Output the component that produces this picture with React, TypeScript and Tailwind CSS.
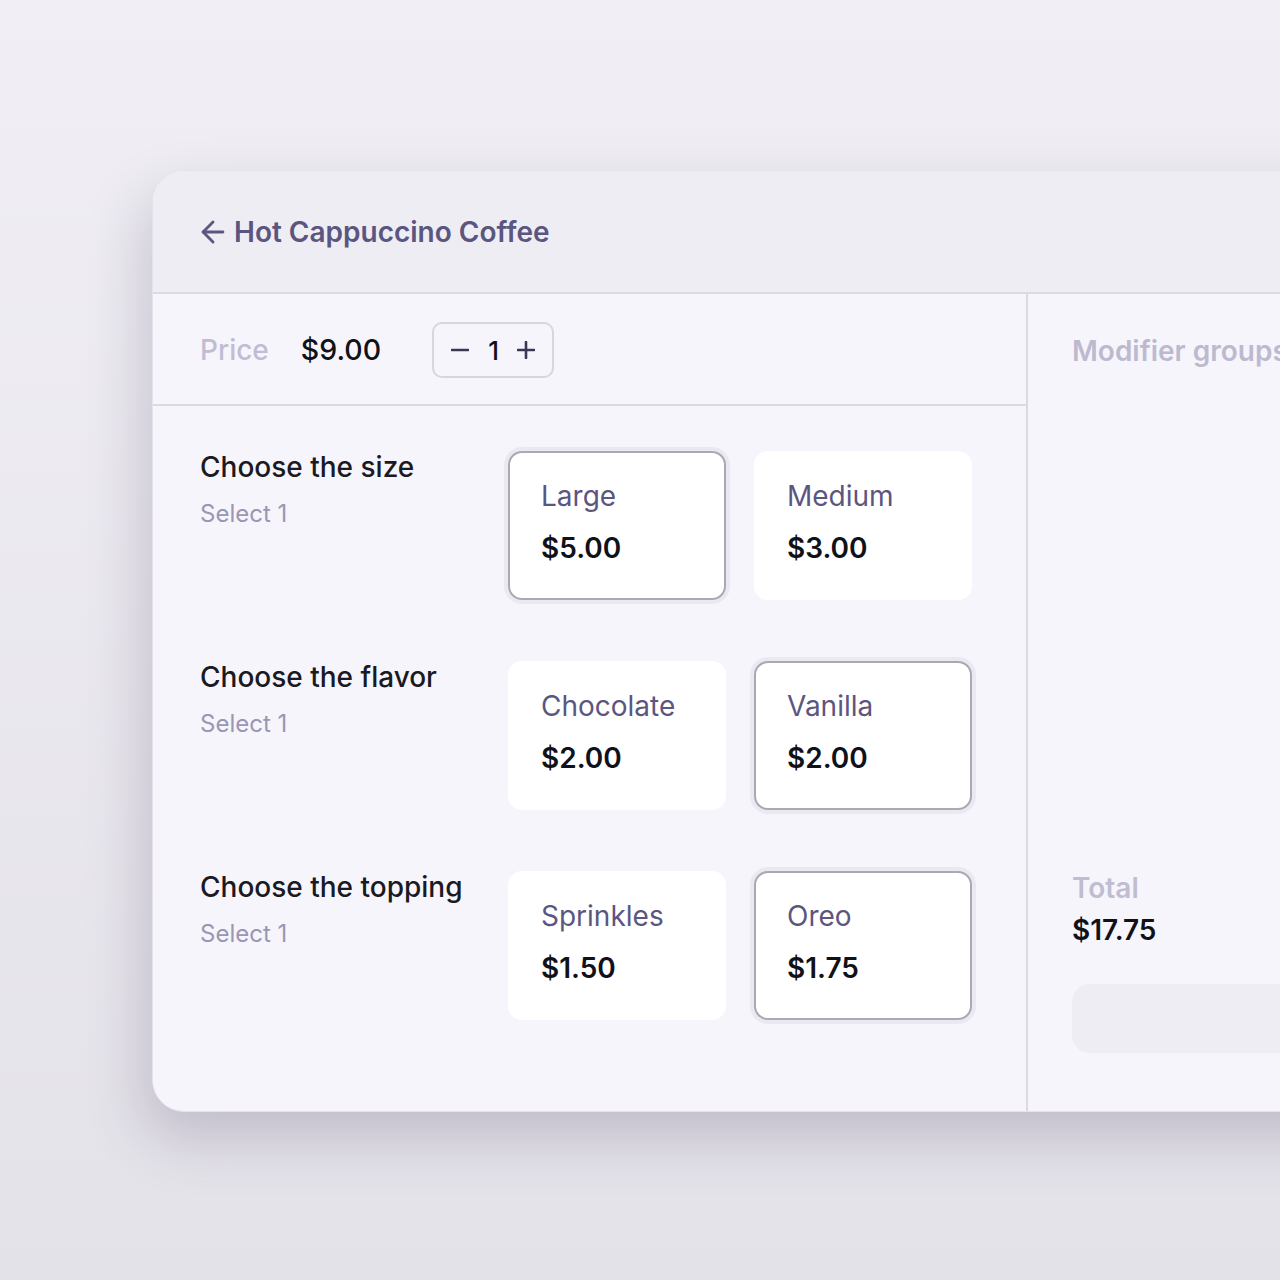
import { ArrowLeft } from "lucide-react";

const groups = [
  {
    title: "Choose the size",
    options: [
      { name: "Large", price: "$5.00", selected: true },
      { name: "Medium", price: "$3.00", selected: false },
    ],
  },
  {
    title: "Choose the flavor",
    options: [
      { name: "Chocolate", price: "$2.00", selected: false },
      { name: "Vanilla", price: "$2.00", selected: true },
    ],
  },
  {
    title: "Choose the topping",
    options: [
      { name: "Sprinkles", price: "$1.50", selected: false },
      { name: "Oreo", price: "$1.75", selected: true },
    ],
  },
];

function OptionCard({ name, price, selected }: { name: string; price: string; selected: boolean }) {
  return (
    <div
      className={
        selected
          ? "w-[218px] h-[149px] rounded-[14px] bg-white border-2 border-[#aaa8b4] ring-4 ring-[#ebe9f0] pl-[31px] pt-[27px]"
          : "w-[218px] h-[149px] rounded-[14px] bg-white border-2 border-white pl-[31px] pt-[27px]"
      }
    >
      <div className="text-[28px] leading-8 text-[#5b5680]">{name}</div>
      <div className="mt-5 text-[28px] leading-8 font-semibold text-[#111118]">{price}</div>
    </div>
  );
}

export default function App() {
  return (
    <div
      className="w-full h-[1280px] overflow-hidden bg-gradient-to-b from-[#f1eff5] to-[#e4e2e9] pt-[170px] pl-[152px]"
      style={{ fontFamily: "Inter, 'Noto Sans', sans-serif" }}
    >
      <div className="w-[1250px] h-[942px] rounded-l-[32px] bg-[#f7f5fc] border border-[#e4e2ea] shadow-[-8px_26px_60px_rgba(40,30,70,0.2)] overflow-hidden flex flex-col">
        <div className="h-[123px] shrink-0 bg-[#efedf4] border-b-2 border-[#dcd9e3] flex items-center pl-[43px] gap-1">
          <ArrowLeft size={34} strokeWidth={2} className="text-[#5b5680]" />
          <h1 className="text-[28px] font-semibold text-[#5b5680]">Hot Cappuccino Coffee</h1>
        </div>

        <div className="flex flex-1">
          <div className="w-[875px] shrink-0 border-r-2 border-[#dcd9e3]">
            <div className="h-[112px] border-b-2 border-[#dcd9e3] flex items-center pl-[47px] pt-[2px]">
              <span className="text-[28px] font-medium text-[#c0bdd3]">Price</span>
              <span className="ml-8 text-[28.5px] font-medium text-[#111118]">$9.00</span>
              <div className="ml-[51px] w-[122px] h-[56px] rounded-[10px] border-2 border-[#d8d5e0] flex items-center justify-between px-[17px]">
                <svg width="18" height="18" viewBox="0 0 18 18" className="text-[#3a3850]">
                  <path d="M1 9h16" stroke="currentColor" strokeWidth="2.6" strokeLinecap="round" />
                </svg>
                <span className="text-[26px] font-medium text-[#111118] ml-[1px]">1</span>
                <svg width="18" height="18" viewBox="0 0 18 18" className="text-[#3a3850]">
                  <path d="M1 9h16M9 1v16" stroke="currentColor" strokeWidth="2.6" strokeLinecap="round" />
                </svg>
              </div>
            </div>

            <div className="pt-[45px] pl-[47px] flex flex-col gap-[61px]">
              {groups.map((g) => (
                <div key={g.title} className="flex">
                  <div className="w-[308px] shrink-0">
                    <div className="text-[28px] leading-8 font-medium text-[#1a1a22]">{g.title}</div>
                    <div className="mt-[15px] text-[24px] leading-8 text-[#9a96b4]">Select 1</div>
                  </div>
                  <div className="flex gap-[28px]">
                    {g.options.map((o) => (
                      <OptionCard key={o.name} {...o} />
                    ))}
                  </div>
                </div>
              ))}
            </div>
          </div>

          <div className="flex-1 pl-[44px] pb-[58px] flex flex-col">
            <div className="h-[112px] flex items-center pt-[2px]">
              <span className="text-[28px] font-semibold text-[#bdbad0] whitespace-nowrap">Modifier groups</span>
            </div>
            <div className="mt-auto">
              <div className="text-[28px] leading-8 font-semibold text-[#c0bdd3]">Total</div>
              <div className="mt-[10px] text-[28px] leading-8 font-semibold text-[#111118]">$17.75</div>
              <div className="mt-[38px] h-[69px] rounded-l-[18px] bg-[#efedf4]" />
            </div>
          </div>
        </div>
      </div>
    </div>
  );
}
